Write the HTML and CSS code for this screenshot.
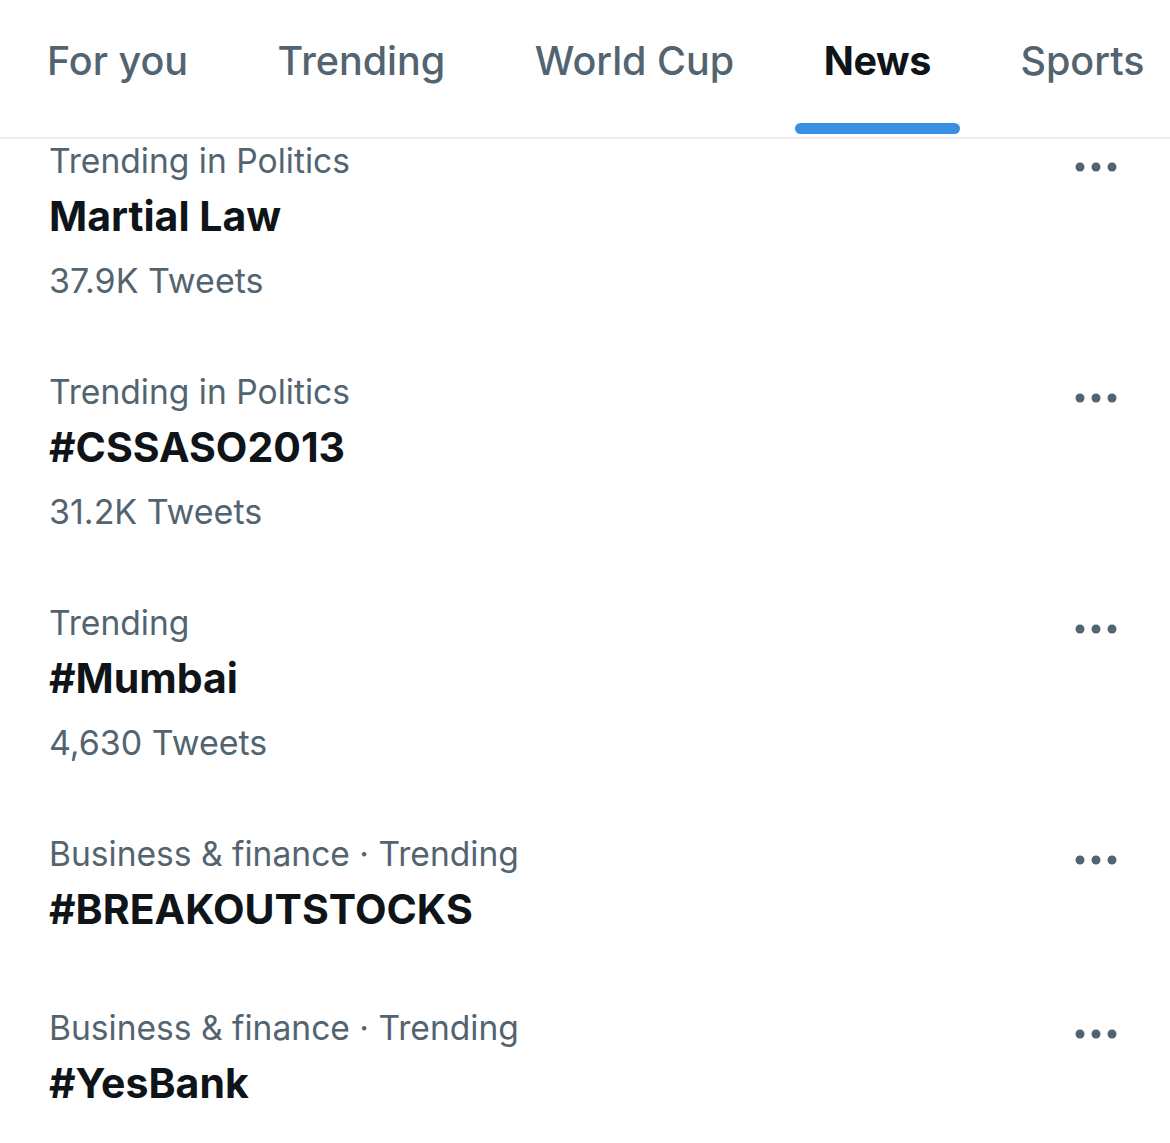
FILE: index.html
```html
<!DOCTYPE html>
<html lang="en">
<head>
<meta charset="utf-8">
<title>Explore - News</title>
<link rel="stylesheet" href="styles.css">
</head>
<body>
<div class="screen">
  <nav class="tabs">
    <div class="tab">For you</div>
    <div class="tab">Trending</div>
    <div class="tab">World Cup</div>
    <div class="tab active">News<span class="indicator"></span></div>
    <div class="tab">Sports</div>
  </nav>
  <main class="list">
    <section class="item">
      <div class="body">
        <div class="meta">Trending in Politics</div>
        <div class="title">Martial Law</div>
        <div class="count">37.9K Tweets</div>
      </div>
      <svg class="more" width="42" height="10" viewBox="0 0 42 10"><circle cx="5" cy="5" r="4.5"/><circle cx="21" cy="5" r="4.5"/><circle cx="37" cy="5" r="4.5"/></svg>
    </section>
    <section class="item">
      <div class="body">
        <div class="meta">Trending in Politics</div>
        <div class="title">#CSSASO2013</div>
        <div class="count">31.2K Tweets</div>
      </div>
      <svg class="more" width="42" height="10" viewBox="0 0 42 10"><circle cx="5" cy="5" r="4.5"/><circle cx="21" cy="5" r="4.5"/><circle cx="37" cy="5" r="4.5"/></svg>
    </section>
    <section class="item">
      <div class="body">
        <div class="meta">Trending</div>
        <div class="title">#Mumbai</div>
        <div class="count">4,630 Tweets</div>
      </div>
      <svg class="more" width="42" height="10" viewBox="0 0 42 10"><circle cx="5" cy="5" r="4.5"/><circle cx="21" cy="5" r="4.5"/><circle cx="37" cy="5" r="4.5"/></svg>
    </section>
    <section class="item no-count">
      <div class="body">
        <div class="meta">Business &amp; finance · Trending</div>
        <div class="title">#BREAKOUTSTOCKS</div>
      </div>
      <svg class="more" width="42" height="10" viewBox="0 0 42 10"><circle cx="5" cy="5" r="4.5"/><circle cx="21" cy="5" r="4.5"/><circle cx="37" cy="5" r="4.5"/></svg>
    </section>
    <section class="item no-count">
      <div class="body">
        <div class="meta">Business &amp; finance · Trending</div>
        <div class="title">#YesBank</div>
      </div>
      <svg class="more" width="42" height="10" viewBox="0 0 42 10"><circle cx="5" cy="5" r="4.5"/><circle cx="21" cy="5" r="4.5"/><circle cx="37" cy="5" r="4.5"/></svg>
    </section>
  </main>
</div>
</body>
</html>
```

FILE: styles.css
```css
html, body {
  margin: 0;
  padding: 0;
  background: #ffffff;
}

body {
  font-family: Inter, "Noto Sans", "Liberation Sans", sans-serif;
  color: #0f1419;
  overflow: hidden;
}

.screen {
  width: 1170px;
  height: 1143px;
  overflow: hidden;
}

.tabs {
  display: flex;
  gap: 89.5px;
  padding: 36px 0 0 47px;
  height: 101px;
  border-bottom: 2px solid #eceef0;
  white-space: nowrap;
}

.tab {
  position: relative;
  font-size: 39.5px;
  line-height: 50px;
  color: #536471;
  font-weight: 500;
}

.tab.active {
  color: #0f1419;
  font-weight: 700;
  letter-spacing: -0.4px;
}

.indicator {
  position: absolute;
  left: -29px;
  right: -29px;
  top: 87px;
  height: 11px;
  border-radius: 6px;
  background: #3b8fe2;
}

.list {
  display: flex;
  flex-direction: column;
}

.item {
  display: flex;
  align-items: flex-start;
  justify-content: space-between;
  padding: 0 53px 57px 49px;
}

.item.no-count {
  padding-bottom: 64px;
}

.body {
  display: flex;
  flex-direction: column;
}

.meta {
  font-size: 33.6px;
  line-height: 44px;
  color: #536471;
}

.title {
  font-size: 41px;
  line-height: 66px;
  font-weight: 700;
  color: #0f1419;
}

.count {
  font-size: 34px;
  line-height: 64px;
  color: #536471;
}

.more {
  margin-top: 23px;
  fill: #536471;
  flex: none;
}
```
